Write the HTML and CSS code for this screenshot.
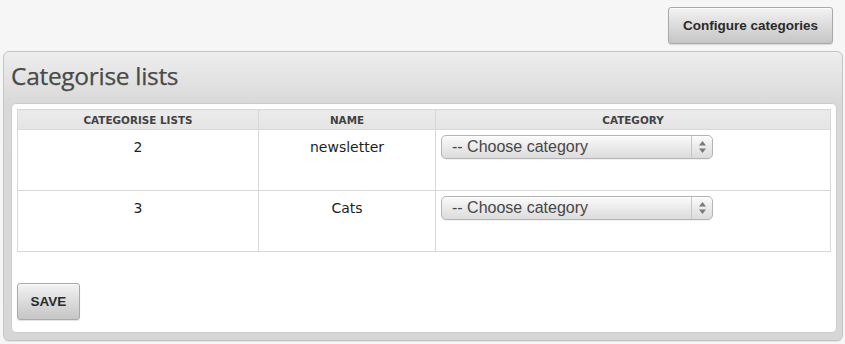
FILE: index.html
```html
<!DOCTYPE html>
<html>
<head>
<meta charset="utf-8">
<title>Categorise lists</title>
<link rel="stylesheet" href="styles.css">
</head>
<body>
<div class="toolbar">
  <button class="btn btn-config" type="button">Configure categories</button>
</div>
<div class="panel">
  <div class="panel-head">
    <h1 class="title">Categorise lists</h1>
  </div>
  <div class="panel-body">
    <table class="grid">
      <thead>
        <tr>
          <th class="c1">CATEGORISE LISTS</th>
          <th class="c2">NAME</th>
          <th class="c3">CATEGORY</th>
        </tr>
      </thead>
      <tbody>
        <tr>
          <td>2</td>
          <td>newsletter</td>
          <td class="sel-cell">
            <div class="select"><span class="select-text">-- Choose category</span><span class="select-arrows"><svg width="9" height="14" viewBox="0 0 9 14"><path d="M4.5 1 L8 5.5 L1 5.5 Z M4.5 13 L8 8.5 L1 8.5 Z" fill="#7a7a7a"/></svg></span></div>
          </td>
        </tr>
        <tr>
          <td>3</td>
          <td>Cats</td>
          <td class="sel-cell">
            <div class="select"><span class="select-text">-- Choose category</span><span class="select-arrows"><svg width="9" height="14" viewBox="0 0 9 14"><path d="M4.5 1 L8 5.5 L1 5.5 Z M4.5 13 L8 8.5 L1 8.5 Z" fill="#7a7a7a"/></svg></span></div>
          </td>
        </tr>
      </tbody>
    </table>
    <div class="actions">
      <button class="btn btn-save" type="button">SAVE</button>
    </div>
  </div>
</div>
</body>
</html>
```

FILE: styles.css
```css
html, body {
  margin: 0;
  padding: 0;
  background: #f6f6f6;
}
body {
  width: 845px;
  height: 344px;
  overflow: hidden;
  font-family: "DejaVu Sans", Verdana, sans-serif;
}
.toolbar {
  display: flex;
  justify-content: flex-end;
  padding: 7px 12px 7px 0;
}
.btn {
  font-family: "Liberation Sans", Arial, sans-serif;
  font-weight: bold;
  font-size: 13.5px;
  color: #2a2a2a;
  background: linear-gradient(#f3f3f3, #d9d9d9 55%, #c6c6c6);
  border: 1px solid #a9a9a9;
  border-radius: 3px;
  box-shadow: 0 1px 1px rgba(0,0,0,0.12), inset 0 1px 0 rgba(255,255,255,0.7);
  padding: 0;
  margin: 0;
  cursor: pointer;
}
.btn-config {
  width: 165px;
  height: 37px;
}
.btn-save {
  width: 63px;
  height: 37px;
}
.panel {
  margin: 0 2px 0 3px;
  border: 1px solid #c4c4c4;
  border-radius: 6px;
  background: linear-gradient(#eeeeee 0, #d9d9d9 51px, #d7d7d7 100%);
  padding: 0 5px 7px 7px;
  box-shadow: 0 1px 0 #e4e4e4;
}
.panel-head {
  height: 51px;
}
.title {
  margin: 0;
  font-family: "Open Sans", "Liberation Sans", sans-serif;
  font-weight: normal;
  font-size: 24.5px;
  line-height: 47px;
  color: #4a4a4a;
  letter-spacing: -0.3px;
  -webkit-text-stroke: 0.25px #4a4a4a;
}
.panel-body {
  background: #ffffff;
  border: 1px solid #cdcdcd;
  border-radius: 5px;
  padding: 5px 5px 12px 5px;
}
.grid {
  width: 100%;
  border-collapse: collapse;
  border: 1px solid #d8d8d8;
  table-layout: fixed;
}
.grid th {
  height: 19px;
  padding: 0;
  background: linear-gradient(#ececec, #e4e4e4);
  border: 1px solid #d8d8d8;
  font-family: "DejaVu Sans", Verdana, sans-serif;
  font-weight: bold;
  font-size: 10.4px;
  color: #424242;
  text-align: center;
  vertical-align: middle;
}
.c1 { width: 240px; }
.c2 { width: 176px; }
.grid td {
  height: 50px;
  padding: 5px 6px 5px 6px;
  border: 1px solid #d8d8d8;
  text-align: center;
  vertical-align: top;
  font-size: 14px;
  line-height: 24px;
  color: #1e1e1e;
}
.grid td.sel-cell {
  text-align: left;
  padding-left: 5px;
}
.select {
  display: flex;
  width: 270px;
  height: 22px;
  border: 1px solid #b4b4b4;
  border-radius: 5px;
  background: linear-gradient(#fbfbfb, #ececec 45%, #dcdcdc);
  box-shadow: inset 0 1px 0 #ffffff, 0 1px 0 rgba(0,0,0,0.05);
}
.select-text {
  flex: 1;
  font-family: "Liberation Sans", Arial, sans-serif;
  font-size: 16px;
  line-height: 22px;
  color: #474747;
  padding-left: 10px;
}
.select-arrows {
  width: 20px;
  border-left: 1px solid #c6c6c6;
  display: flex;
  align-items: center;
  justify-content: center;
}
.select-arrows svg {
  display: block;
}
.actions {
  padding-top: 31px;
}
```
